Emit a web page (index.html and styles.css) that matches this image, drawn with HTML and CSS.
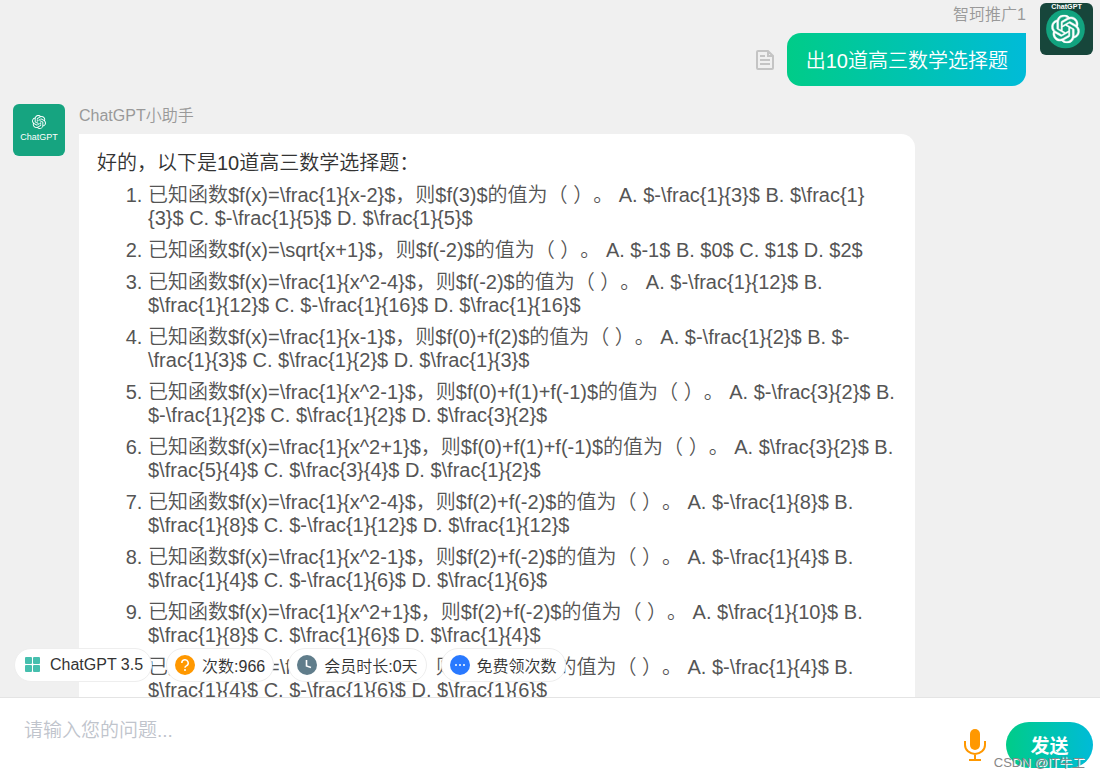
FILE: index.html
```html
<!DOCTYPE html>
<html lang="zh-CN">
<head>
  <meta charset="UTF-8">
  <title>ChatGPT小助手</title>
  <meta name="viewport" content="width=device-width, initial-scale=1.0">
  <link rel="stylesheet" href="styles.css">
</head>
<body>

  <!-- shared logo shape -->
  <svg class="defs" width="0" height="0" aria-hidden="true">
    <symbol id="logo" viewBox="0 0 24 24">
      <path d="M22.2819 9.8211a5.9847 5.9847 0 0 0-.5157-4.9108 6.0462 6.0462 0 0 0-6.5098-2.9A6.0651 6.0651 0 0 0 4.9807 4.1818a5.9847 5.9847 0 0 0-3.9977 2.9 6.0462 6.0462 0 0 0 .7427 7.0966 5.98 5.98 0 0 0 .511 4.9107 6.051 6.051 0 0 0 6.5146 2.9001A5.9847 5.9847 0 0 0 13.2599 24a6.0557 6.0557 0 0 0 5.7718-4.2058 5.9894 5.9894 0 0 0 3.9977-2.9001 6.0557 6.0557 0 0 0-.7475-7.0729zm-9.022 12.6081a4.4755 4.4755 0 0 1-2.8764-1.0408l.1419-.0804 4.7783-2.7582a.7948.7948 0 0 0 .3927-.6813v-6.7369l2.02 1.1686a.071.071 0 0 1 .038.052v5.5826a4.504 4.504 0 0 1-4.4945 4.4944zm-9.6607-4.1254a4.4708 4.4708 0 0 1-.5346-3.0137l.142.0852 4.783 2.7582a.7712.7712 0 0 0 .7806 0l5.8428-3.3685v2.3324a.0804.0804 0 0 1-.0332.0615L9.74 19.9502a4.4992 4.4992 0 0 1-6.1408-1.6464zM2.3408 7.8956a4.485 4.485 0 0 1 2.3655-1.9728V11.6a.7664.7664 0 0 0 .3879.6765l5.8144 3.3543-2.0201 1.1685a.0757.0757 0 0 1-.071 0l-4.8303-2.7865A4.504 4.504 0 0 1 2.3408 7.872zm16.5963 3.8558L13.1038 8.364 15.1192 7.2a.0757.0757 0 0 1 .071 0l4.8303 2.7913a4.4944 4.4944 0 0 1-.6765 8.1042v-5.6772a.79.79 0 0 0-.407-.667zm2.0107-3.0231l-.142-.0852-4.7735-2.7818a.7759.7759 0 0 0-.7854 0L9.409 9.2297V6.8974a.0662.0662 0 0 1 .0284-.0615l4.8303-2.7866a4.4992 4.4992 0 0 1 6.6802 4.66zM8.3065 12.863l-2.02-1.1638a.0804.0804 0 0 1-.038-.0567V6.0742a4.4992 4.4992 0 0 1 7.3757-3.4537l-.142.0805L8.704 5.459a.7948.7948 0 0 0-.3927.6813zm1.0976-2.3654l2.602-1.4998 2.6069 1.4998v2.9994l-2.5974 1.4997-2.6067-1.4997Z"/>
    </symbol>
  </svg>

  <main class="chat">
    <div class="message message-user">
      <svg class="avatar" viewBox="0 0 52 52" preserveAspectRatio="xMidYMid slice">
        <rect width="52" height="52" fill="#17463b"/>
        <text x="26" y="6" class="avatar-title">ChatGPT</text>
        <circle cx="25" cy="26" r="19" fill="#12a37f"/>
        <use href="#logo" x="11" y="12" width="28" height="28" fill="#fff" stroke="#fff" stroke-width="0.4"/>
      </svg>
      <div class="message-body">
        <div class="name">智珂推广1</div>
        <div class="bubble-row">
          <button class="copy-button" type="button" aria-label="复制">
            <svg width="18" height="20" viewBox="0 0 18 20" fill="none" stroke="#c4c4c4" stroke-width="2">
              <path d="M2 1h10l5 5v12a1 1 0 0 1-1 1H2a1 1 0 0 1-1-1V2a1 1 0 0 1 1-1zM12 1v5h5M4 6h5M4 10h10M4 14h10"/>
            </svg>
          </button>
          <div class="bubble">出10道高三数学选择题</div>
        </div>
      </div>
    </div>

    <div class="message message-bot">
      <svg class="avatar" viewBox="0 0 52 52">
        <rect width="52" height="52" fill="#16a480"/>
        <use href="#logo" x="19" y="11" width="14" height="14" fill="#fff"/>
        <text x="26" y="36" class="avatar-label">ChatGPT</text>
      </svg>
      <div class="message-body">
        <div class="name">ChatGPT小助手</div>
        <div class="bubble">
          <p>好的，以下是10道高三数学选择题：</p>
          <ol>
            <li>已知函数$f(x)=\frac{1}{x-2}$，则$f(3)$的值为（ ）。 A. $-\frac{1}{3}$ B. $\frac{1}{3}$ C. $-\frac{1}{5}$ D. $\frac{1}{5}$</li>
            <li>已知函数$f(x)=\sqrt{x+1}$，则$f(-2)$的值为（ ）。 A. $-1$ B. $0$ C. $1$ D. $2$</li>
            <li>已知函数$f(x)=\frac{1}{x^2-4}$，则$f(-2)$的值为（ ）。 A. $-\frac{1}{12}$ B. $\frac{1}{12}$ C. $-\frac{1}{16}$ D. $\frac{1}{16}$</li>
            <li>已知函数$f(x)=\frac{1}{x-1}$，则$f(0)+f(2)$的值为（ ）。 A. $-\frac{1}{2}$ B. $-\frac{1}{3}$ C. $\frac{1}{2}$ D. $\frac{1}{3}$</li>
            <li>已知函数$f(x)=\frac{1}{x^2-1}$，则$f(0)+f(1)+f(-1)$的值为（ ）。 A. $-\frac{3}{2}$ B. $-\frac{1}{2}$ C. $\frac{1}{2}$ D. $\frac{3}{2}$</li>
            <li>已知函数$f(x)=\frac{1}{x^2+1}$，则$f(0)+f(1)+f(-1)$的值为（ ）。 A. $\frac{3}{2}$ B. $\frac{5}{4}$ C. $\frac{3}{4}$ D. $\frac{1}{2}$</li>
            <li>已知函数$f(x)=\frac{1}{x^2-4}$，则$f(2)+f(-2)$的值为（ ）。 A. $-\frac{1}{8}$ B. $\frac{1}{8}$ C. $-\frac{1}{12}$ D. $\frac{1}{12}$</li>
            <li>已知函数$f(x)=\frac{1}{x^2-1}$，则$f(2)+f(-2)$的值为（ ）。 A. $-\frac{1}{4}$ B. $\frac{1}{4}$ C. $-\frac{1}{6}$ D. $\frac{1}{6}$</li>
            <li>已知函数$f(x)=\frac{1}{x^2+1}$，则$f(2)+f(-2)$的值为（ ）。 A. $\frac{1}{10}$ B. $\frac{1}{8}$ C. $\frac{1}{6}$ D. $\frac{1}{4}$</li>
            <li>已知函数$f(x)=\frac{1}{x^2-1}$，则$f(2)+f(-2)$的值为（ ）。 A. $-\frac{1}{4}$ B. $\frac{1}{4}$ C. $-\frac{1}{6}$ D. $\frac{1}{6}$</li>
          </ol>
        </div>
      </div>
    </div>
  </main>

  <footer class="composer">
    <div class="tools">
      <button type="button">
        <svg width="20" height="20" viewBox="0 0 20 20" fill="#46bfae">
          <rect x="2" y="2" width="7" height="7" rx="1"/>
          <rect x="10" y="2" width="7" height="7" rx="1"/>
          <rect x="2" y="10" width="7" height="7" rx="1"/>
          <rect x="10" y="10" width="7" height="7" rx="1"/>
        </svg>
        ChatGPT 3.5
      </button>
      <button type="button">
        <svg width="20" height="20" viewBox="0 0 20 20" fill="none">
          <circle cx="10" cy="10" r="10" fill="#ff9800"/>
          <path d="M6.8 8a3.2 3.2 0 1 1 4.6 2.8c-1 .5-1.4 1-1.4 2" stroke="#fff" stroke-width="1.5"/>
          <circle cx="10" cy="15" r="1" fill="#fff"/>
        </svg>
        次数:966
      </button>
      <button type="button">
        <svg width="20" height="20" viewBox="0 0 20 20" fill="none">
          <circle cx="10" cy="10" r="10" fill="#607d8b"/>
          <path d="M9.5 5v6l4.500 1.500" stroke="#fff" stroke-width="1.600"/>
        </svg>
        会员时长:0天
      </button>
      <button type="button">
        <svg width="20" height="20" viewBox="0 0 20 20" fill="#fff">
          <circle cx="10" cy="10" r="10" fill="#2979ff"/>
          <circle cx="6" cy="10" r="1"/>
          <circle cx="10" cy="10" r="1"/>
          <circle cx="14" cy="10" r="1"/>
        </svg>
        免费领次数
      </button>
    </div>
    <textarea aria-label="问题" placeholder="请输入您的问题..."></textarea>
    <button class="mic-button" type="button" aria-label="语音输入">
      <svg width="22" height="32" viewBox="0 0 22 32" fill="none" stroke="#ff9800" stroke-width="2">
        <rect x="6" y="0" width="10" height="21" rx="5" fill="#ff9800" stroke="none"/>
        <path d="M1 12v4a10 9 0 0 0 20 0v-4M11 25v6M5 31h12"/>
      </svg>
    </button>
    <button class="send-button" type="button">发送</button>
    <span class="watermark">CSDN @IT牛工</span>
  </footer>

</body>
</html>
```
FILE: styles.css
```css
* {
  margin: 0;
  padding: 0;
  box-sizing: border-box;
}

body {
  height: 100vh;
  display: flex;
  flex-direction: column;
  background-color: #f0f0f0;
  color: #333;
  font-family: "Liberation Sans", "Noto Sans CJK SC", sans-serif;
  font-weight: 350;
  font-size: 20px;
  text-spacing-trim: space-all;
}

button, textarea {
  font: inherit;
  color: inherit;
  border: none;
  background: none;
}

button {
  cursor: pointer;
}

.defs {
  position: absolute;
}

.chat {
  flex: 1;
  min-height: 0;
  overflow: hidden;
  padding: 3px 7px 0 13px;
}

.message {
  display: flex;
  gap: 14px;
  margin-bottom: 18px;
}

.message-user {
  flex-direction: row-reverse;
}

.message-bot .message-body {
  flex: 1;
  margin-right: 178px;
}

.avatar {
  width: 52px;
  height: 52px;
  flex: none;
  border-radius: 6px;
}

.message-user .avatar {
  width: 53px;
}

.avatar-title, .avatar-label {
  fill: #fff;
  text-anchor: middle;
  font-size: 7px;
  font-weight: bold;
}

.avatar-label {
  font-size: 9px;
  font-weight: normal;
}

.name {
  margin-bottom: 6px;
  color: #999;
  font-size: 16px;
  line-height: 24px;
}

.message-user .name {
  text-align: right;
}

.bubble-row {
  display: flex;
  align-items: center;
  gap: 13px;
}

.copy-button svg {
  display: block;
}

.bubble {
  padding: 16px 18px;
  border-radius: 14px;
  background-color: white;
}

.message-user .bubble {
  padding: 14px 18px 10px 19px;
  border-top-right-radius: 0;
  background: linear-gradient(to right, #00cc88, #00bbd8);
  color: white;
  line-height: 29px;
}

.message-bot .bubble {
  border-top-left-radius: 0;
}

.bubble p {
  line-height: 26px;
}

.bubble ol {
  padding-left: 51px;
  color: #555;
}

.bubble li {
  margin-top: 9px;
  line-height: 23px;
}

.bubble p + ol {
  margin-top: -1px;
}

.composer {
  position: relative;
  display: flex;
  align-items: center;
  height: 82px;
  padding: 12px 7px 0 14px;
  border-top: 1px solid #e4e4e4;
  background-color: white;
}

/* pills float over the end of the conversation */
.tools {
  position: absolute;
  left: 14px;
  bottom: 97px;
  display: flex;
  gap: 14px;
}

.tools button {
  display: flex;
  align-items: center;
  gap: 7px;
  height: 34px;
  padding: 0 8px;
  border: 1px solid #eee;
  border-radius: 17px;
  background-color: white;
  font-size: 16px;
  white-space: nowrap;
}

.composer textarea {
  flex: 1;
  height: 60px;
  padding: 2px 10px;
  resize: none;
  outline: none;
  font-size: 19px;
  line-height: 28px;
}

.composer textarea::placeholder {
  color: #c0c4cc;
}

.mic-button svg {
  display: block;
}

.send-button {
  width: 87px;
  height: 46px;
  margin-left: 20px;
  border-radius: 23px;
  background: linear-gradient(to right, #00cc88, #00bbd8);
  color: white;
  font-size: 19px;
  font-weight: bold;
}

.watermark {
  position: absolute;
  right: 15px;
  bottom: 6px;
  color: #888;
  font-size: 13px;
  line-height: 20px;
  text-shadow: 1px 1px 0 white;
}
```
